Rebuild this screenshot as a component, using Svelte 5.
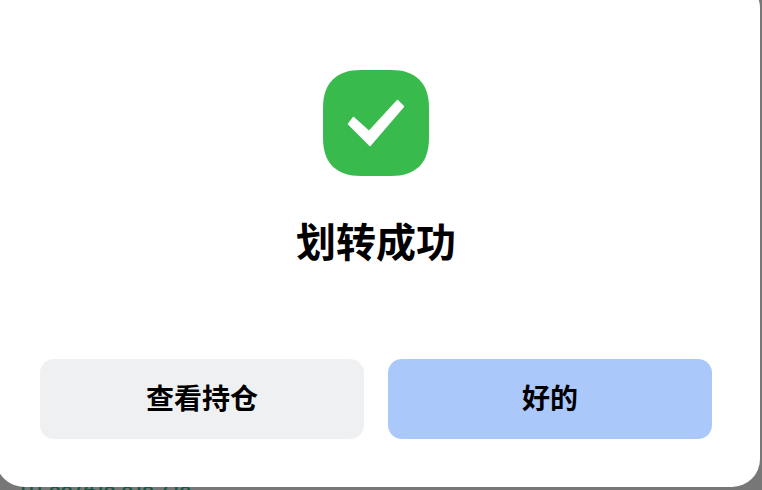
<script>
  const title = '划转成功';
</script>

<div class="page">
  <div class="behind">111.887418.818.718</div>
  <div class="dialog">
    <svg class="icon" viewBox="0 0 106 106" width="106" height="106" aria-hidden="true">
      <path fill="#38bb4c" d="M38 0H68C93 0 106 13 106 38V68C106 93 93 106 68 106H38C13 106 0 93 0 68V38C0 13 13 0 38 0Z"/>
      <path fill="#fff" stroke="#fff" stroke-width="1.500" stroke-linejoin="round" d="M25.500 54L30.500 47.500L46 61.500L74.500 30.500L80.500 36.500L47 75.500Z"/>
    </svg>
    <h1>{title}</h1>
    <div class="actions">
      <button class="secondary">查看持仓</button>
      <button class="primary">好的</button>
    </div>
  </div>
</div>

<style>
  :global(body) {
    margin: 0;
    background: #777;
  }
  .page {
    position: relative;
    width: 762px;
    height: 490px;
    overflow: hidden;
    background: #777;
    font-family: "Inter", "Noto Sans CJK SC", sans-serif;
  }
  .behind {
    position: absolute;
    left: 18px;
    top: 478px;
    color: #0f5c42;
    font-size: 18px;
    font-weight: 600;
    line-height: 20px;
    letter-spacing: 0.700px;
    white-space: nowrap;
  }
  .dialog {
    position: absolute;
    left: -4px;
    top: -20px;
    width: 764px;
    height: 507px;
    box-sizing: border-box;
    padding: 90px 48px 0 44px;
    border-radius: 28px;
    background: #fff;
    display: flex;
    flex-direction: column;
    align-items: center;
  }
  .icon {
    display: block;
  }
  h1 {
    margin: 39px 0 0;
    font-size: 40px;
    line-height: 56px;
    font-weight: 700;
    color: #000;
  }
  .actions {
    margin-top: 88px;
    width: 100%;
    display: flex;
    gap: 24px;
  }
  button {
    flex: 1;
    height: 80px;
    border: 0;
    border-radius: 14px;
    padding: 0 0 4px;
    font-family: inherit;
    font-size: 28px;
    font-weight: 700;
    color: #000;
  }
  .secondary {
    background: #eff0f2;
  }
  .primary {
    background: #abc8fb;
  }
</style>
